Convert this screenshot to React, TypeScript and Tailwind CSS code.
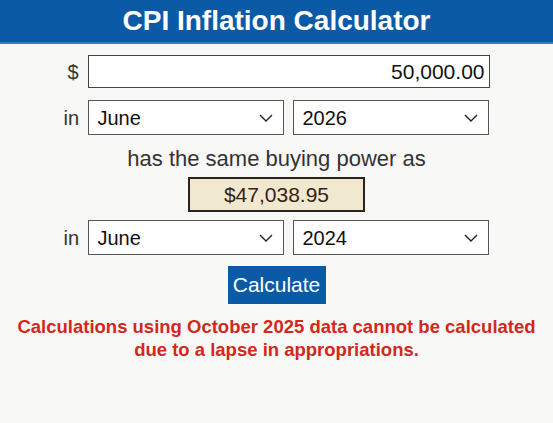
import React from "react";

function Chevron() {
  return (
    <svg width="14" height="8" viewBox="0 0 14 8" className="shrink-0">
      <path d="M1 1 L7 7 L13 1" fill="none" stroke="#222" strokeWidth="1.4" />
    </svg>
  );
}

function Select({ value }: { value: string }) {
  return (
    <div className="flex h-[35px] w-[196px] items-center justify-between border border-[#555] bg-white pl-[9px] pr-[10px] text-[20px] text-[#111]">
      <span>{value}</span>
      <Chevron />
    </div>
  );
}

export default function App() {
  return (
    <div
      className="min-h-[423px] w-[553px] bg-[#f8f8f6]"
      style={{ fontFamily: '"Liberation Sans", Arial, sans-serif' }}
    >
      <div className="flex h-[44px] items-center justify-center border-b-2 border-[#2f7fc4] bg-[#0b5aa6]">
        <h1 className="text-[28px] font-bold leading-none text-white">CPI Inflation Calculator</h1>
      </div>
      <div className="mx-auto flex w-[426px] flex-col items-center pt-[11px] text-[20px] text-[#222]">
        <div className="flex w-full items-center">
          <span className="w-[24px] pl-[4px] text-[#333]">$</span>
          <div className="flex h-[33px] w-[402px] items-center justify-end border border-[#444] bg-white pr-[4px] text-[21px] text-[#111]">
            50,000.00
          </div>
        </div>
        <div className="mt-[12px] flex w-full items-center">
          <span className="w-[24px] text-[#333]">in</span>
          <div className="flex gap-[9px]">
            <Select value="June" />
            <Select value="2026" />
          </div>
        </div>
        <div className="mt-[12px] text-[22px] leading-[24px] text-[#333]">has the same buying power as</div>
        <div className="mt-[6px] flex h-[35px] w-[177px] items-center justify-center border-2 border-[#2a2420] bg-[#f1e9cf] text-[21px] text-[#3a1d14]">
          $47,038.95
        </div>
        <div className="mt-[8px] flex w-full items-center">
          <span className="w-[24px] text-[#333]">in</span>
          <div className="flex gap-[9px]">
            <Select value="June" />
            <Select value="2024" />
          </div>
        </div>
        <button className="mt-[11px] h-[38px] w-[98px] bg-[#0b5aa6] text-[21px] text-white">Calculate</button>
      </div>
      <div className="mt-[11px] text-center text-[18.5px] font-bold leading-[23px] text-[#d2281b]">
        Calculations using October 2025 data cannot be calculated
        <br />
        due to a lapse in appropriations.
      </div>
    </div>
  );
}
